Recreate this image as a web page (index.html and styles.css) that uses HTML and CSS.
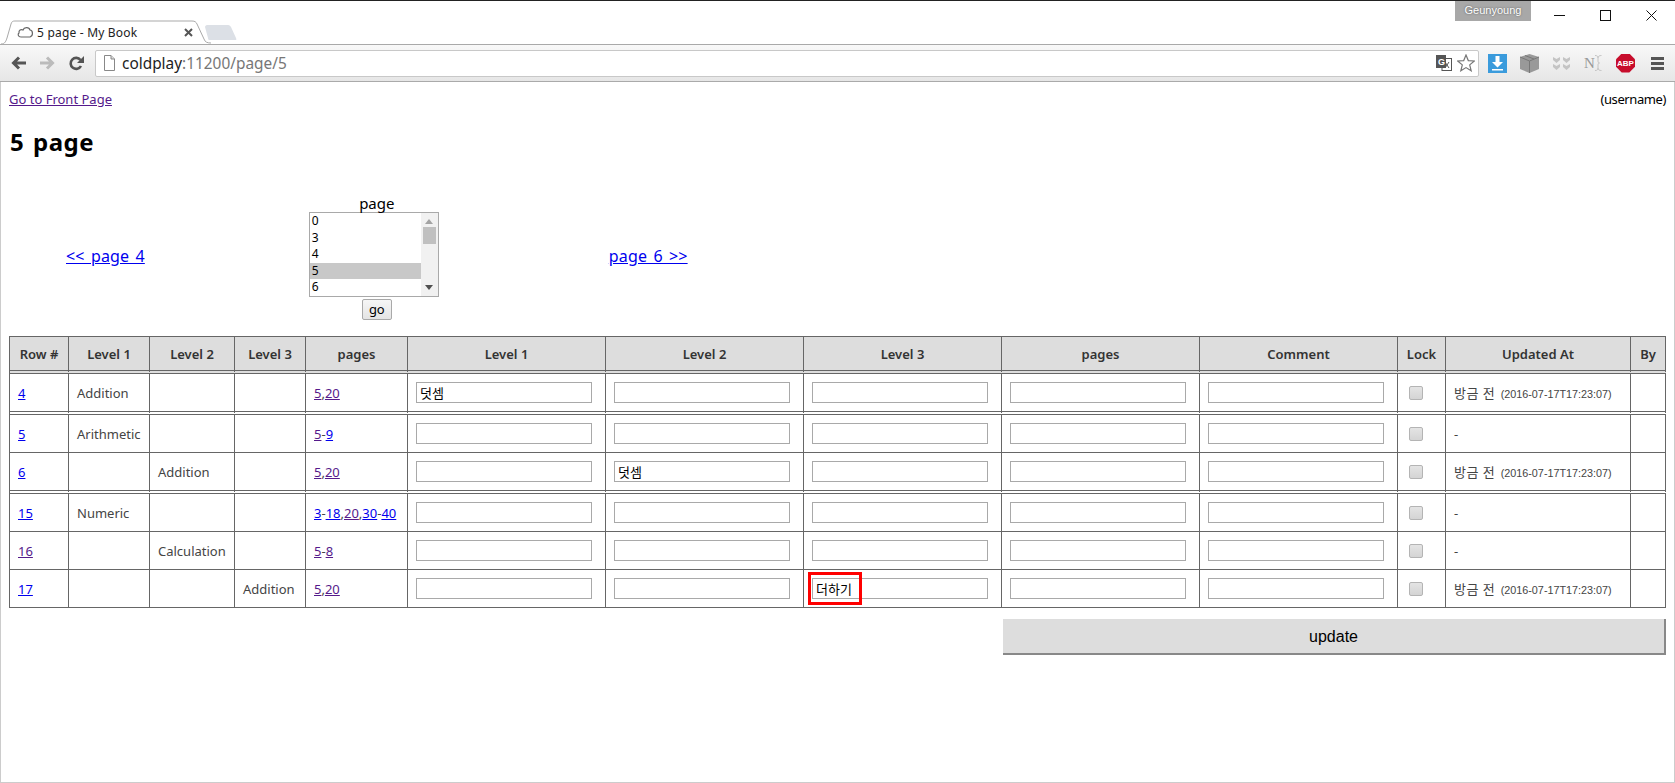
FILE: index.html
```html
<!DOCTYPE html>
<html lang="ko">
<head>
    <meta charset="UTF-8">
    <title>5 page - My Book</title>
    <link rel="stylesheet" href="styles.css">
</head>
<body>

    <!-- Title bar with tab strip -->
    <div class="titlebar">
        <div class="tab">
            <svg class="tab-shape" width="210" height="24" viewBox="0 0 210 24">
                <path d="M0 24 C4 24 5 21 6 18 L10 4 C11 1 12 1 15 1 L191 1 C194 1 195 2 196 4 L203 19 C204 22 206 23 210 23" fill="#fff" stroke="#a9a9a9"/>
            </svg>
            <svg class="tab-icon" width="17" height="12" viewBox="0 0 17 12">
                <path d="M4 11 C1 11 0.5 8 2 7 C1.5 4 4 3 6 4 C7 1 12 0.5 13 4 C16 4 16.5 10 13 11 Z" fill="#fff" stroke="#666" stroke-width="1.2"/>
            </svg>
            <span class="tab-title">5 page - My Book</span>
            <svg class="tab-close" width="9" height="9" viewBox="0 0 9 9">
                <path d="M1 1 L8 8 M8 1 L1 8" stroke="#555" stroke-width="2"/>
            </svg>
        </div>
        <svg class="new-tab" width="33" height="16" viewBox="0 0 33 16">
            <path d="M1 2 C1 1 2 0 3 0 L24 0 C26 0 26 1 27 2 L32 13 C33 15 32 15 31 15 L6 15 C5 15 4 15 4 13 Z" fill="#dce0e6"/>
        </svg>
        <div class="profile">Geunyoung</div>
        <div class="window-buttons">
            <svg width="11" height="11" viewBox="0 0 11 11"><path d="M0 5.5 H11" stroke="#111"/></svg>
            <svg width="11" height="11" viewBox="0 0 11 11"><rect x="0.5" y="0.5" width="10" height="10" fill="none" stroke="#111"/></svg>
            <svg width="11" height="11" viewBox="0 0 11 11"><path d="M0.5 0.5 L10.5 10.5 M10.5 0.5 L0.5 10.5" stroke="#111"/></svg>
        </div>
    </div>

    <!-- Toolbar -->
    <div class="toolbar">
        <svg class="nav-icon" width="15" height="14" viewBox="0 0 15 14">
            <path d="M15 7 H3 M8 1.5 L2.5 7 L8 12.5" fill="none" stroke="#555" stroke-width="3"/>
        </svg>
        <svg class="nav-icon" width="15" height="14" viewBox="0 0 15 14">
            <path d="M0 7 H12 M7 1.5 L12.5 7 L7 12.5" fill="none" stroke="#bbb" stroke-width="3"/>
        </svg>
        <svg class="nav-icon" width="15" height="15" viewBox="0 0 15 15">
            <path d="M12 10 A5.5 5.5 0 1 1 11.5 4" fill="none" stroke="#555" stroke-width="2.6"/>
            <path d="M15 0 V7 H8 Z" fill="#555"/>
        </svg>
        <div class="address">
            <svg class="doc-icon" width="11" height="16" viewBox="0 0 11 16">
                <path d="M0.5 0.5 H7 L10.5 4 V15.5 H0.5 Z" fill="#fff" stroke="#888"/>
                <path d="M7 0.5 V4 H10.5" fill="#ddd" stroke="#888"/>
            </svg>
            <span class="url">coldplay<span class="url-rest">:11200/page/5</span></span>
            <svg class="translate-icon" width="16" height="16" viewBox="0 0 16 16">
                <rect x="6" y="3.5" width="9.5" height="12" fill="#fff" stroke="#555"/>
                <path d="M9 7 L13 13 M13 7 L9 13" stroke="#555"/>
                <rect x="0" y="0" width="10" height="13" fill="#555"/>
                <text x="2" y="10" class="translate-g">G</text>
            </svg>
            <svg class="star-icon" width="18" height="18" viewBox="0 0 18 18">
                <path d="M9 1 L11.3 6.6 L17.3 7 L12.7 10.9 L14.2 16.8 L9 13.6 L3.8 16.8 L5.3 10.9 L0.7 7 L6.7 6.6 Z" fill="#fff" stroke="#777" stroke-width="1.2"/>
            </svg>
        </div>
        <svg class="ext-download" width="19" height="19" viewBox="0 0 19 19">
            <rect width="19" height="19" fill="#3a9bdc"/>
            <path d="M7.5 2 H11.5 V8 H15 L9.5 13.5 L4 8 H7.5 Z" fill="#fff"/>
            <rect x="4" y="15" width="11" height="1.5" fill="#fff"/>
        </svg>
        <svg class="ext-box" width="19" height="19" viewBox="0 0 19 19">
            <path d="M9.5 0 L19 3 V15 L9.5 19 L0 15 V3 Z" fill="#999"/>
            <path d="M0 3 L9.5 7 L19 3 M9.5 7 V19 M5 1.5 L14 5" fill="none" stroke="#777"/>
        </svg>
        <svg class="ext-hearts" width="17" height="15" viewBox="0 0 17 15">
            <path d="M0 1 L3.5 3 L7 1 L7 4 L3.5 7 L0 4 Z M10 1 L13.5 3 L17 1 L17 4 L13.5 7 L10 4 Z M0 8 L3.5 10 L7 8 L7 11 L3.5 14 L0 11 Z M10 8 L13.5 10 L17 8 L17 11 L13.5 14 L10 11 Z" fill="#c4c4c4"/>
        </svg>
        <svg class="ext-note" width="18" height="18" viewBox="0 0 18 18">
            <text x="0" y="14" class="ext-note-n">N</text>
            <path d="M11 1.5 C13 1.5 14 2 14 4 V7 C14 8.500 14.500 9 15.500 9 C14.500 9 14 9.500 14 11 V14 C14 16 13 16.500 11 16.500 M17.500 1.500 C15.500 1.500 14 2 14 4 M17.500 16.500 C15.500 16.500 14 16 14 14" fill="none" stroke="#c4c4c4"/>
        </svg>
        <div class="ext-abp">ABP</div>
        <div class="menu-icon"><span></span><span></span><span></span></div>
    </div>

    <!-- Page -->
    <div class="page">
        <div class="top-row">
            <a class="visited" href="#">Go to Front Page</a>
            <span class="username">(username)</span>
        </div>
        <h1>5 page</h1>

        <div class="pager">
            <a class="pager-link" href="#">&lt;&lt; page 4</a>
            <div class="picker">
                <div class="picker-label">page</div>
                <div class="listbox">
                    <div class="options">
                        <div class="option">0</div>
                        <div class="option">3</div>
                        <div class="option">4</div>
                        <div class="option selected">5</div>
                        <div class="option">6</div>
                    </div>
                    <div class="scrollbar">
                        <span class="arrow-up"></span>
                        <span class="thumb"></span>
                        <span class="arrow-down"></span>
                    </div>
                </div>
                <button class="go">go</button>
            </div>
            <a class="pager-link" href="#">page 6 &gt;&gt;</a>
        </div>

        <table class="entries">
            <colgroup>
                <col class="c-row"><col class="c-l1"><col class="c-l2"><col class="c-l3"><col class="c-pages">
                <col class="c-field"><col class="c-field"><col class="c-field"><col class="c-field"><col class="c-field">
                <col class="c-lock"><col class="c-updated"><col class="c-by">
            </colgroup>
            <thead>
                <tr>
                    <th>Row #</th><th>Level 1</th><th>Level 2</th><th>Level 3</th><th>pages</th>
                    <th>Level 1</th><th>Level 2</th><th>Level 3</th><th>pages</th><th>Comment</th>
                    <th>Lock</th><th>Updated At</th><th>By</th>
                </tr>
            </thead>
            <tbody>
                <tr class="group-end">
                    <td><a href="#">4</a></td><td>Addition</td><td></td><td></td>
                    <td><a class="visited" href="#">5</a>,<a class="visited" href="#">20</a></td>
                    <td><input type="text" value="덧셈"></td><td><input type="text"></td><td><input type="text"></td><td><input type="text"></td><td><input type="text"></td>
                    <td><input type="checkbox"></td>
                    <td><span class="ago">방금 전</span> <small>(2016-07-17T17:23:07)</small></td><td></td>
                </tr>
                <tr>
                    <td><a href="#">5</a></td><td>Arithmetic</td><td></td><td></td>
                    <td><a class="visited" href="#">5</a>-<a href="#">9</a></td>
                    <td><input type="text"></td><td><input type="text"></td><td><input type="text"></td><td><input type="text"></td><td><input type="text"></td>
                    <td><input type="checkbox"></td>
                    <td>-</td><td></td>
                </tr>
                <tr class="group-end">
                    <td><a href="#">6</a></td><td></td><td>Addition</td><td></td>
                    <td><a class="visited" href="#">5</a>,<a class="visited" href="#">20</a></td>
                    <td><input type="text"></td><td><input type="text" value="덧셈"></td><td><input type="text"></td><td><input type="text"></td><td><input type="text"></td>
                    <td><input type="checkbox"></td>
                    <td><span class="ago">방금 전</span> <small>(2016-07-17T17:23:07)</small></td><td></td>
                </tr>
                <tr>
                    <td><a href="#">15</a></td><td>Numeric</td><td></td><td></td>
                    <td><a href="#">3</a>-<a href="#">18</a>,<a class="visited" href="#">20</a>,<a href="#">30</a>-<a href="#">40</a></td>
                    <td><input type="text"></td><td><input type="text"></td><td><input type="text"></td><td><input type="text"></td><td><input type="text"></td>
                    <td><input type="checkbox"></td>
                    <td>-</td><td></td>
                </tr>
                <tr>
                    <td><a class="visited" href="#">16</a></td><td></td><td>Calculation</td><td></td>
                    <td><a class="visited" href="#">5</a>-<a class="visited" href="#">8</a></td>
                    <td><input type="text"></td><td><input type="text"></td><td><input type="text"></td><td><input type="text"></td><td><input type="text"></td>
                    <td><input type="checkbox"></td>
                    <td>-</td><td></td>
                </tr>
                <tr>
                    <td><a href="#">17</a></td><td></td><td></td><td>Addition</td>
                    <td><a class="visited" href="#">5</a>,<a class="visited" href="#">20</a></td>
                    <td><input type="text"></td><td><input type="text"></td>
                    <td class="marked"><input type="text" value="더하기"><span class="highlight"></span></td>
                    <td><input type="text"></td><td><input type="text"></td>
                    <td><input type="checkbox"></td>
                    <td><span class="ago">방금 전</span> <small>(2016-07-17T17:23:07)</small></td><td></td>
                </tr>
            </tbody>
        </table>

        <button class="update">update</button>
    </div>

</body>
</html>
```

FILE: styles.css
```css
html, body {
    height: 100%;
}
body {
    margin: 0;
    display: flex;
    flex-direction: column;
    overflow: hidden;
    background-color: #fff;
    color: #000;
    font-family: "Noto Sans", "Noto Sans CJK KR", sans-serif;
    font-size: 13px;
}

/* Title bar */
.titlebar {
    display: flex;
    height: 43px;
    border-top: 1px solid #222;
    flex: none;
}
.tab {
    position: relative;
    width: 203px;
    margin-left: 1px;
    margin-top: 19px;
    height: 24px;
    display: flex;
    align-items: center;
    z-index: 1;
}
.tab-shape {
    position: absolute;
    left: 0;
    top: 0;
}
.tab-icon {
    position: relative;
    margin-left: 16px;
    margin-right: 3px;
}
.tab-title {
    position: relative;
    font-size: 12px;
    letter-spacing: 0.2px;
    color: #222;
    width: 147px;
    white-space: nowrap;
}
.tab-close {
    position: relative;
}
.new-tab {
    margin-top: 24px;
}
.profile {
    margin-left: auto;
    width: 76px;
    height: 20px;
    background-color: #a8a8a8;
    color: #fff;
    font-family: "Liberation Sans", sans-serif;
    font-size: 11px;
    line-height: 19px;
    text-align: center;
    text-shadow: 0 0 2px #555;
}
.window-buttons {
    display: flex;
    gap: 35px;
    padding: 9px 18px 0 23px;
}

/* Toolbar */
.toolbar {
    display: flex;
    align-items: center;
    height: 36px;
    flex: none;
    padding-left: 11px;
    padding-right: 11px;
    border-top: 1px solid #a9a9a9;
    border-bottom: 1px solid #aaa;
    background: linear-gradient(#f8f8f8, #e6e6e6);
}
.nav-icon {
    margin-right: 14px;
}
.nav-icon:nth-child(3) {
    margin-right: 11px;
}
.address {
    flex: 1;
    height: 25px;
    display: flex;
    align-items: center;
    padding: 0 3px 0 8px;
    background-color: #fff;
    border: 1px solid #c8c8c8;
    border-radius: 2px;
}
.doc-icon {
    margin-right: 7px;
}
.url {
    font-size: 15.4px;
    color: #222;
}
.url-rest {
    color: #777;
}
.translate-icon {
    margin-left: auto;
    margin-right: 5px;
}
.translate-g {
    fill: #fff;
    font-family: "Liberation Sans", sans-serif;
    font-size: 9px;
    font-weight: bold;
}
.ext-download {
    margin-left: 9px;
}
.ext-box {
    margin-left: 13px;
}
.ext-hearts {
    margin-left: 14px;
}
.ext-note {
    margin-left: 14px;
}
.ext-note-n {
    fill: #999;
    font-family: "Liberation Serif", serif;
    font-size: 15px;
}
.ext-abp {
    width: 19px;
    height: 19px;
    margin-left: 14px;
    background-color: #c70d2c;
    clip-path: polygon(30% 0, 70% 0, 100% 30%, 100% 70%, 70% 100%, 30% 100%, 0 70%, 0 30%);
    color: #fff;
    font-family: "Liberation Sans", sans-serif;
    font-size: 8px;
    font-weight: bold;
    line-height: 19px;
    text-align: center;
}
.menu-icon {
    margin-left: 16px;
    width: 13px;
    display: flex;
    flex-direction: column;
    gap: 2px;
}
.menu-icon span {
    height: 3px;
    background-color: #555;
}

/* Page */
.page {
    flex: 1;
    display: flex;
    flex-direction: column;
    padding: 8px 8px 0;
    border: 1px solid #ccc;
    border-top: none;
}
a {
    color: #00e;
}
a.visited {
    color: #551a8b;
}
.top-row {
    display: flex;
    justify-content: space-between;
    line-height: 18px;
}
.username {
    letter-spacing: -0.4px;
}
h1 {
    margin: 18px 0 0 1px;
    font-size: 24px;
    line-height: 32px;
    letter-spacing: 0.5px;
    word-spacing: 2px;
}

.pager {
    display: flex;
    align-items: center;
    margin-top: 36px;
    padding-left: 57px;
}
.pager-link {
    padding-bottom: 2px;
    font-size: 16px;
    letter-spacing: 0.15px;
    word-spacing: 2px;
    white-space: nowrap;
}
.picker {
    margin: 0 164px;
    width: 136px;
    text-align: center;
}
.picker-label {
    font-size: 15px;
    line-height: 18px;
}
.listbox {
    display: flex;
    box-sizing: border-box;
    width: 130px;
    height: 85px;
    border: 1px solid #a9a9a9;
    text-align: left;
}
.options {
    flex: 1;
    font-size: 12px;
    line-height: 16.5px;
}
.option {
    padding-left: 2px;
}
.option.selected {
    background-color: #c8c8c8;
}
.scrollbar {
    width: 17px;
    display: flex;
    flex-direction: column;
    align-items: center;
    background-color: #f1f1f1;
}
.arrow-up {
    margin-top: 6px;
    border: 4px solid transparent;
    border-top: none;
    border-bottom: 5px solid #a3a3a3;
}
.thumb {
    width: 13px;
    height: 17px;
    margin-top: 3px;
    background-color: #c0c0c0;
}
.arrow-down {
    margin-top: auto;
    margin-bottom: 6px;
    border: 4px solid transparent;
    border-bottom: none;
    border-top: 5px solid #505050;
}
.go {
    display: block;
    width: 30px;
    height: 21px;
    margin: 2px auto 0;
    padding: 0;
    background: linear-gradient(#f6f6f6, #e4e4e4);
    border: 1px solid #a9a9a9;
    border-radius: 2px;
    color: #000;
    font-family: inherit;
    font-size: 13px;
    line-height: 17px;
}

/* Table */
.entries {
    table-layout: fixed;
    width: 1657px;
    margin-top: 16px;
    border-collapse: separate;
    border-spacing: 0;
    border-left: 1px solid #666;
    border-top: 1px solid #666;
    color: #444;
}
.c-row { width: 59px; }
.c-l1 { width: 81px; }
.c-l2 { width: 85px; }
.c-l3 { width: 71px; }
.c-pages { width: 102px; }
.c-field { width: 198px; }
.c-lock { width: 48px; }
.c-updated { width: 185px; }
.c-by { width: 35px; }
.entries th, .entries td {
    box-sizing: border-box;
    padding: 0 8px;
    border-right: 1px solid #666;
    border-bottom: 1px solid #666;
    white-space: nowrap;
}
.entries th {
    height: 37px;
    padding: 0 4px;
    background-color: #ddd;
    border-bottom: 4px double #666;
    color: #333;
    font-size: 13px;
    font-weight: 600;
}
.entries td {
    height: 38px;
}
.entries .group-end td {
    height: 41px;
    border-bottom: 4px double #666;
}
.entries .ago {
    letter-spacing: 0.5px;
}
.entries small {
    font-family: "Liberation Sans", sans-serif;
    font-size: 10.8px;
    margin-left: 2px;
}
.entries input[type="text"] {
    display: block;
    box-sizing: border-box;
    width: 176px;
    height: 21px;
    margin: 0 0 1px;
    padding: 1px 3px;
    border: 1px solid #a9a9a9;
    color: #000;
    font-family: inherit;
    font-size: 13px;
}
.entries input[type="checkbox"] {
    display: block;
    appearance: none;
    width: 14px;
    height: 14px;
    margin: 0 0 0 3px;
    background: linear-gradient(#e4e4e4, #d4d4d4);
    border: 1px solid #b4b4b4;
    border-radius: 2px;
}
.marked {
    position: relative;
}
/* red annotation drawn over the screenshot */
.highlight {
    position: absolute;
    left: 4px;
    top: 2px;
    width: 48px;
    height: 27px;
    border: 3px solid #f00;
}

.update {
    align-self: flex-end;
    width: 663px;
    height: 36px;
    margin-top: 11px;
    padding-top: 2px;
    background-color: #ddd;
    border: none;
    border-right: 2px solid #888;
    border-bottom: 2px solid #888;
    color: #000;
    font-family: "Liberation Sans", sans-serif;
    font-size: 16px;
}
```
